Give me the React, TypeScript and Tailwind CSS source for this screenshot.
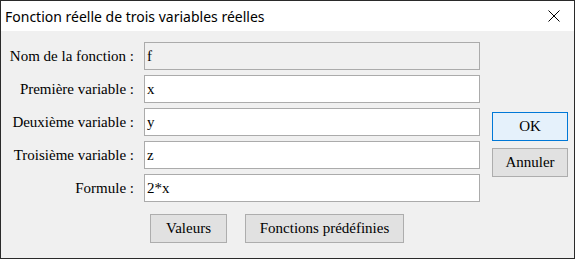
import React from "react";

const serif = "font-['Liberation_Serif','Times_New_Roman',serif]";

function Row({ label, value, disabled }: { label: string; value: string; disabled?: boolean }) {
  return (
    <div className="flex items-center h-[28px]">
      <div className={`w-[134px] text-right text-[15px] text-black leading-none pr-[1px] ${serif}`}>
        {label}
      </div>
      <div
        className={`ml-[9px] w-[336px] h-[28px] border border-[#ababab] flex items-center pl-[2px] text-[15px] text-black ${serif} ${
          disabled ? "bg-[#f0f0f0]" : "bg-white"
        }`}
      >
        {value}
      </div>
    </div>
  );
}

export default function App() {
  return (
    <div className="w-[575px] h-[259px] border border-[#2a2a2a] bg-[#f0f0f0] flex flex-col overflow-hidden">
      <div className="h-[30px] bg-white flex items-center justify-between shrink-0">
        <span className="pl-[4px] text-[14px] text-black font-['Noto_Sans','Segoe_UI',sans-serif]">
          Fonction réelle de trois variables réelles
        </span>
        <svg width="12" height="12" viewBox="0 0 12 12" className="mr-[14px]">
          <path d="M0.5 0.5 L11.5 11.5 M11.5 0.5 L0.5 11.5" stroke="#000" strokeWidth="1" />
        </svg>
      </div>
      <div className="flex-1 flex flex-col pt-[11px]">
        <div className="flex">
          <div className="flex flex-col gap-[5px]">
            <Row label="Nom de la fonction :" value="f" disabled />
            <Row label="Première variable :" value="x" />
            <Row label="Deuxième variable :" value="y" />
            <Row label="Troisième variable :" value="z" />
            <Row label="Formule :" value="2*x" />
          </div>
          <div className="ml-[12px] pt-[70px] flex flex-col gap-[7px]">
            <button className={`w-[76px] h-[29px] border border-[#0078d7] bg-[#e5f1fb] text-[15px] text-black ${serif}`}>
              OK
            </button>
            <button className={`w-[76px] h-[29px] border border-[#adadad] bg-[#e1e1e1] text-[15px] text-black ${serif}`}>
              Annuler
            </button>
          </div>
        </div>
        <div className="flex gap-[18px] mt-[12px] ml-[149px]">
          <button className={`w-[77px] h-[29px] border border-[#adadad] bg-[#e1e1e1] text-[15px] text-black ${serif}`}>
            Valeurs
          </button>
          <button className={`w-[159px] h-[29px] border border-[#adadad] bg-[#e1e1e1] text-[15px] text-black ${serif}`}>
            Fonctions prédéfinies
          </button>
        </div>
      </div>
    </div>
  );
}
